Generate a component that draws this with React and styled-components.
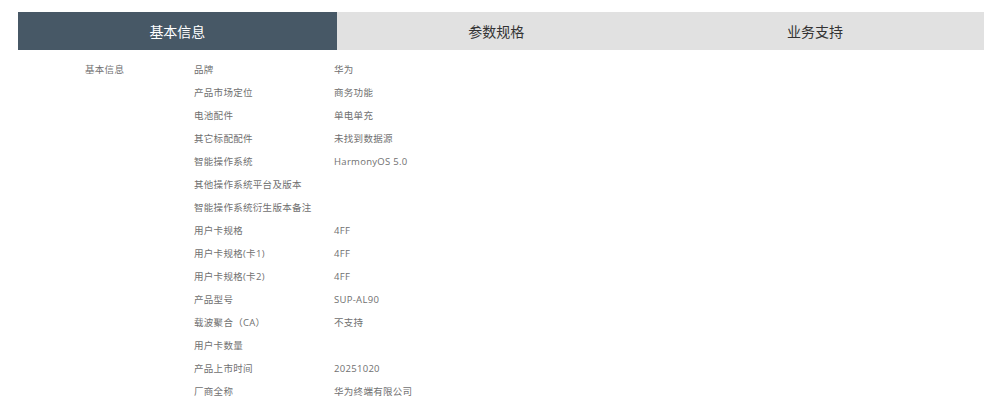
import React, { useState } from 'react'
import styled, { createGlobalStyle } from 'styled-components'

const GlobalStyle = createGlobalStyle`
  body {
    margin: 0;
    background: #ffffff;
    font-family: "Noto Sans CJK SC", "Noto Sans", sans-serif;
  }
`

const tabs = ['基本信息', '参数规格', '业务支持']

const specs = [
  ['品牌', '华为'],
  ['产品市场定位', '商务功能'],
  ['电池配件', '单电单充'],
  ['其它标配配件', '未找到数据源'],
  ['智能操作系统', 'HarmonyOS 5.0'],
  ['其他操作系统平台及版本', ''],
  ['智能操作系统衍生版本备注', ''],
  ['用户卡规格', '4FF'],
  ['用户卡规格(卡1)', '4FF'],
  ['用户卡规格(卡2)', '4FF'],
  ['产品型号', 'SUP-AL90'],
  ['载波聚合（CA）', '不支持'],
  ['用户卡数量', ''],
  ['产品上市时间', '20251020'],
  ['厂商全称', '华为终端有限公司'],
]

function App() {
  const [active, setActive] = useState(0)

  return (
    <Page>
      <GlobalStyle />
      <TabBar>
        {tabs.map((t, i) => (
          <Tab key={t} $active={i === active} onClick={() => setActive(i)}>
            {t}
          </Tab>
        ))}
      </TabBar>
      <SpecTable>
        <GroupName style={{ gridRow: `1 / span ${specs.length}` }}>基本信息</GroupName>
        {specs.map(([k, v]) => (
          <React.Fragment key={k}>
            <Cell>{k}</Cell>
            <Cell>{v}</Cell>
          </React.Fragment>
        ))}
      </SpecTable>
    </Page>
  )
}

export default App

const Page = styled.div`
  width: 1000px;
  height: 399px;
  overflow: hidden;
  padding: 12px 16px 0 18px;
  box-sizing: border-box;
`

const TabBar = styled.div`
  display: flex;
  height: 38px;
  background: #e1e1e1;
`

const Tab = styled.div`
  width: 33%;
  display: flex;
  align-items: center;
  justify-content: center;
  font-size: 14px;
  cursor: pointer;
  color: ${p => (p.$active ? '#ffffff' : '#333333')};
  background: ${p => (p.$active ? '#475866' : 'transparent')};
`

const SpecTable = styled.div`
  display: grid;
  grid-template-columns: 109px 140px 1fr;
  grid-auto-rows: 23px;
  margin-top: 8px;
  padding-left: 67px;
  font-family: "Open Sans", "Noto Sans CJK SC", sans-serif;
  font-size: 9.5px;
  letter-spacing: 0.3px;
  color: #707070;
`

const GroupName = styled.div`
  grid-column: 1;
  line-height: 23px;
`

const Cell = styled.div`
  line-height: 23px;
  white-space: nowrap;
`
